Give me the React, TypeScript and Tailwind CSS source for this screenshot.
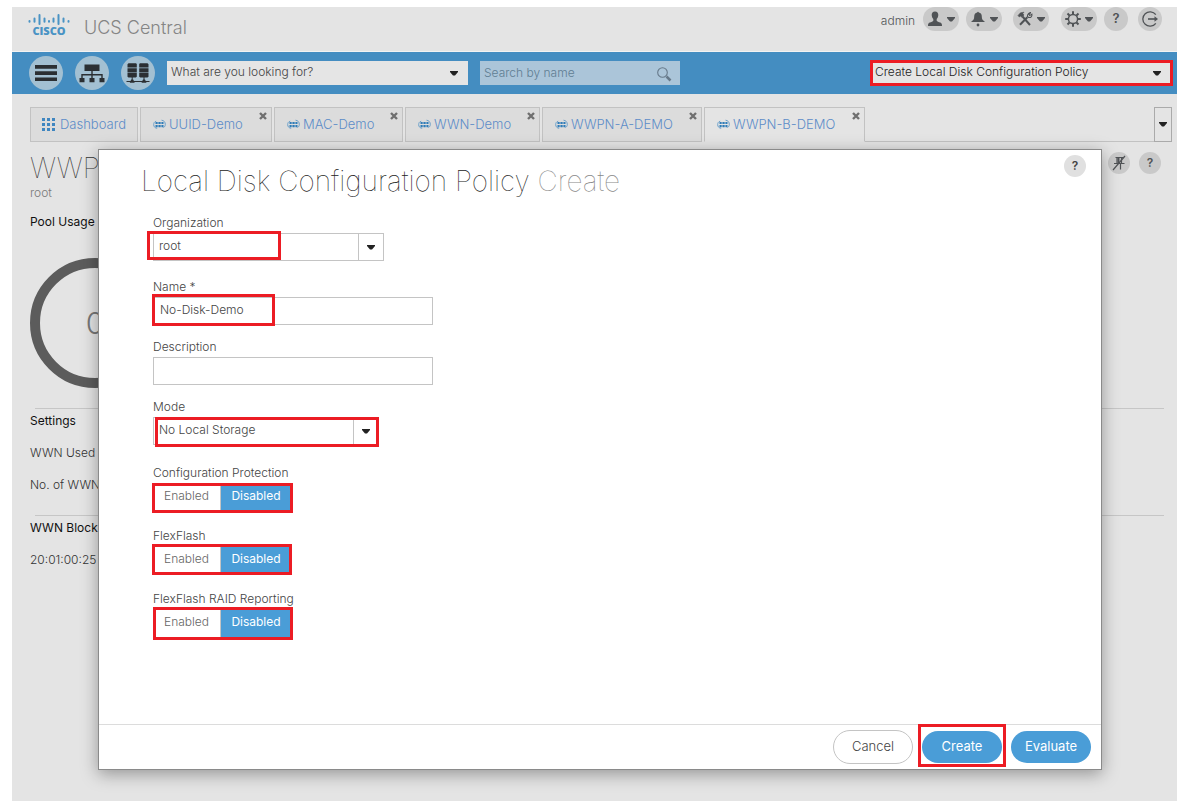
import React from 'react';
import clsx from 'clsx';

const Caret: React.FC<{ className?: string }> = ({ className }) => (
    <svg viewBox="0 0 8 5" className={clsx('w-2 h-[5px] shrink-0', className)} aria-hidden="true">
        <path d="M0 0h8v1L5 4.500H3L0 1z" fill="currentColor" />
    </svg>
);

// Red frame laid over a control that the guide points at
const Highlight: React.FC<{ className: string }> = ({ className }) => (
    <span className={clsx('absolute border-[3px] border-[#ec1c24] pointer-events-none', className)} />
);

const CiscoLogo: React.FC = () => (
    <div className="w-[42px] flex flex-col items-center text-[#4a93c4]">
        <svg viewBox="0 0 42 11" className="w-[42px] h-[11px]" fill="none" stroke="currentColor" strokeWidth="2" strokeLinecap="round">
            <path d="M1.5 7v.8M6.500 4.600v3.200M11.500 1v9M16.500 4.600v3.200M21 7v.8M25.500 4.600v3.200M30.500 1v9M35.500 4.600v3.200M40.500 7v.8" />
        </svg>
        <span className="font-['Open_Sans',sans-serif] text-[11px] leading-[12px] font-extrabold">CISCO</span>
    </div>
);

const PoolIcon: React.FC = () => (
    <svg viewBox="0 0 13 11" className="w-[13px] h-[11px] shrink-0" fill="none" stroke="#6a9fca" aria-hidden="true">
        <path d="M3.2 2.200C1.400 2.600.7 4 .7 5.700c0 2 1.300 3.400 3.500 3.600" />
        <path d="M8.500 1.200c2.400.2 3.800 1.900 3.800 4.100 0 1.500-.7 2.700-1.800 3.200" />
        <path d="M4 4h5.500M4 7h5.500" strokeWidth=".7" />
        <path d="M2.500 2.900h2.100v2.200H2.500zM5.500 2.900h2.100v2.200H5.500zM8.500 2.900h2v2.200h-2zM2.500 6h2.100v2.200H2.500zM5.500 6h2.100v2.200H5.500zM8.500 6h2v2.200h-2z" fill="#2f7cb8" stroke="none" />
    </svg>
);

const UserIcon = () => (
    <svg viewBox="0 0 16 16" className="w-4 h-4" fill="currentColor">
        <path d="M8 .5c2.200 0 3.400 1.500 3.300 3.600C11.200 6 10.500 7.300 9.700 8v1.700c.4.900 2 1.200 3.600 1.900 1.300.6 1.700 1.400 1.700 3.400H1c0-2 .4-2.800 1.700-3.400 1.600-.7 3.200-1 3.600-1.900V8c-.8-.7-1.500-2-1.600-3.900C4.600 2 5.800.5 8 .5z" />
    </svg>
);

const BellIcon = () => (
    <svg viewBox="0 0 16 16" className="w-4 h-4" fill="currentColor">
        <path d="M7.200 1.500C7.200.5 8.800.5 8.800 1.500c2 .4 3 1.900 3 4 0 2.800.8 3.600 2.700 4.700V11h-13v-.8C3.400 9.100 4.200 8.300 4.200 5.500c0-2.100 1-3.600 3-4z" />
        <circle cx="8" cy="14" r="1.400" />
    </svg>
);

const ToolsIcon = () => (
    <svg viewBox="0 0 16 16" className="w-4 h-4" fill="none" stroke="currentColor">
        <path d="M5.500 5.500l7.500 8.500" strokeWidth="2" />
        <path d="M1 4.500l2.500-2.700 3.500-.6-1.200 1.400L7 4 4.800 6.300 3.500 5 2.300 6z" fill="currentColor" strokeWidth=".6" />
        <path d="M10.300 6.200L3 13.800" strokeWidth="2" />
        <path d="M13.800 1.500L11.900 3.400l.8 1.200 2.200-1.500c.5 2.300-1.200 3.900-3.400 3.300-1.700-.7-1.700-4 2.300-4.900" strokeWidth="1.100" />
    </svg>
);

const GearIcon = () => (
    <svg viewBox="0 0 16 16" className="w-4 h-4" fill="none" stroke="currentColor">
        <circle cx="8" cy="8" r="4.600" strokeWidth="1.500" />
        <path d="M8 .2v3M8 12.800v3M.2 8h3M12.800 8h3M2.500 2.500l2 2M11.500 11.500l2 2M2.500 13.500l2-2M11.500 4.500l2-2" strokeWidth="2" />
    </svg>
);

const LogoutIcon = () => (
    <svg viewBox="0 0 18 18" className="w-[18px] h-[18px]" fill="none" stroke="currentColor" strokeWidth="1.300">
        <path d="M14.800 4.700A7.200 7.200 0 1 0 14.800 13.300" />
        <path d="M7 9h8" strokeWidth="1.600" />
        <path d="M13.500 6.300L17 9l-3.500 2.700z" fill="currentColor" stroke="none" />
    </svg>
);

const PinIcon = () => (
    <svg viewBox="0 0 16 16" className="w-4 h-4" fill="none" stroke="currentColor" strokeWidth="1.200">
        <path d="M4.500 2.500h8M6 2.500v5.500M10.500 2.500v5.500M3 8.500h10.500M9.500 9v5.500" />
        <path d="M6.500 3h2v5h-2z" fill="currentColor" stroke="none" />
        <path d="M14 1L2 15" />
    </svg>
);

const MenuIcon = () => (
    <svg viewBox="0 0 24 24" className="w-6 h-6" fill="currentColor">
        <path d="M1 4h22v3.700H1zM1 10.200h22v3.700H1zM1 16.400h22v3.700H1z" />
    </svg>
);

const TreeIcon = () => (
    <svg viewBox="0 0 26 24" className="w-[26px] h-6" fill="currentColor">
        <path d="M5.500 3.500h15V10h-15zM.5 17h5v4.300h-5zM10.500 17h5v4.300h-5zM20.500 17h5v4.300h-5z" />
        <path d="M13 10v7M3 17v-3.300h20V17" fill="none" stroke="currentColor" strokeWidth="1.400" />
    </svg>
);

const ServersIcon = () => (
    <svg viewBox="0 0 24 24" className="w-6 h-6" fill="currentColor">
        <path d="M2.500 2.200H10l.8.8v3.600H1.500V3.200zM1.500 7.200h9.300v4.300H1.500zM1.500 12.100h9.300v3.600l-1 .8H2.500l-1-.8zM14 2.200h7.500l1 1v3.400h-9.300V3zM13.200 7.200h9.300v4.300h-9.300zM13.200 12.100h9.300v3.600l-1 .8h-7.300l-1-.8zM5.200 18.500h2l1.500 3.300h-5zM17 18.500h2l1.500 3.300h-5z" />
        <path d="M.5 20.500h23M6.200 16v3M18 16v3" fill="none" stroke="currentColor" strokeWidth="1" />
    </svg>
);

const pills = [
    { label: 'Account', Icon: UserIcon, spacing: 'ml-2' },
    { label: 'Alerts', Icon: BellIcon, spacing: 'ml-[7px]' },
    { label: 'Tools', Icon: ToolsIcon, spacing: 'ml-[11px]' },
    { label: 'Settings', Icon: GearIcon, spacing: 'ml-3' },
];

const Header: React.FC = () => (
    <header className="h-[45px] pl-4 pr-[15px] border-b border-[#f2f2f2] flex items-start justify-between">
        <div className="pt-[7px] flex items-start gap-[14px]">
            <CiscoLogo />
            <span className="pt-[2px] text-lg leading-6 font-light text-[#858585]">UCS Central</span>
        </div>
        <div className="flex items-start text-[#505356]">
            <span className="pt-[2px] text-xs leading-6 font-light">admin</span>
            {pills.map(({ label, Icon, spacing }) => (
                <button key={label} aria-label={label} className={clsx('w-9 h-6 rounded-full bg-[#c9c9c9] flex items-center justify-center gap-1', spacing)}>
                    <Icon />
                    <Caret />
                </button>
            ))}
            <button className="ml-[7px] w-6 h-6 rounded-full bg-[#c9c9c9] text-[13px] font-semibold">?</button>
            <button aria-label="Log out" className="ml-[10px] w-6 h-6 rounded-full bg-[#c9c9c9] flex items-center justify-center">
                <LogoutIcon />
            </button>
        </div>
    </header>
);

const NavBar: React.FC = () => {
    const shortcuts = [
        { label: 'Menu', Icon: MenuIcon },
        { label: 'Organizations', Icon: TreeIcon },
        { label: 'Servers', Icon: ServersIcon },
    ];

    return (
        <nav className="h-[42px] pl-[17px] pr-1 bg-[#448dc1] flex items-center">
            <div className="flex gap-3">
                {shortcuts.map(({ label, Icon }) => (
                    <button key={label} aria-label={label} className="w-[34px] h-[34px] rounded-full bg-[#a3c0d2] text-[#2b2f33] flex items-center justify-center">
                        <Icon />
                    </button>
                ))}
            </div>
            <div className="relative ml-3 w-[301px]">
                <select aria-label="What are you looking for?" className="block w-full h-6 px-1 pb-[2px] appearance-none bg-[#e5e5e5] text-xs font-light text-[#444]">
                    <option>What are you looking for?</option>
                </select>
                <Caret className="absolute right-[10px] top-[10px] text-[#222]" />
            </div>
            <div className="relative ml-3 w-[200px]">
                <input aria-label="Search by name" placeholder="Search by name" className="block w-full h-6 px-1 pb-[2px] bg-[#abc5d9] text-xs font-light placeholder:text-[#5f7d92]" />
                <svg viewBox="0 0 16 16" className="absolute right-2 top-[5px] w-4 h-4" fill="none" stroke="#66798a" aria-hidden="true">
                    <circle cx="6.500" cy="6.500" r="4.800" strokeWidth="1.100" />
                    <path d="M10.500 10.500l4 4" strokeWidth="2.500" />
                </svg>
            </div>
            <div className="relative ml-auto w-[303px]">
                <select aria-label="Task" className="block w-full h-6 px-[5px] pb-[2px] appearance-none bg-[#e5e5e5] text-xs font-light text-[#222]">
                    <option>Create Local Disk Configuration Policy</option>
                </select>
                <Caret className="absolute right-3 top-[10px] text-[#222]" />
                <Highlight className="-inset-y-[1px] inset-x-0" />
            </div>
        </nav>
    );
};

const tabs = [
    { name: 'UUID-Demo', width: 'w-[132px]' },
    { name: 'MAC-Demo', width: 'w-[129px]' },
    { name: 'WWN-Demo', width: 'w-[135px]' },
    { name: 'WWPN-A-DEMO', width: 'w-[160px]' },
    { name: 'WWPN-B-DEMO', width: 'w-[161px]', active: true },
];

const TabBar: React.FC = () => (
    <div className="mt-[13px] ml-[18px] mr-[5px] h-[35px] flex gap-[2px] text-[13px] font-light text-[#5d8cc8]">
        <button className="w-[108px] border border-[#c2c2c2] bg-[#dcdcdc] flex items-center justify-center gap-[5px]">
            <svg viewBox="0 0 13 13" className="w-[13px] h-[13px]" fill="#3f86c0" aria-hidden="true">
                <path d="M0 0h3v3H0zM5 0h3v3H5zM10 0h3v3h-3zM0 5h3v3H0zM5 5h3v3H5zM10 5h3v3h-3zM0 10h3v3H0zM5 10h3v3H5zM10 10h3v3h-3z" />
            </svg>
            Dashboard
        </button>
        {tabs.map(({ name, width, active }) => (
            <div key={name} className={clsx('border border-[#c2c2c2] pl-3 pr-1 flex justify-between', width, active ? 'border-b-transparent' : 'bg-[#dcdcdc]')}>
                <button className="flex items-center gap-[3px] whitespace-nowrap">
                    <PoolIcon />
                    {name}
                </button>
                <button aria-label={`Close ${name}`} className="self-start pt-1 text-[#6f6f6f]">
                    <svg viewBox="0 0 8 8" className="w-2 h-2" fill="none" stroke="currentColor" strokeWidth="2.400">
                        <path d="M1 1l6 6M7 1L1 7" />
                    </svg>
                </button>
            </div>
        ))}
        <div className="flex-1 -mx-[2px] border-b border-[#c2c2c2]" />
        <button aria-label="More tabs" className="w-[18px] border border-[#aaa] text-[#222] flex items-center justify-center">
            <Caret />
        </button>
    </div>
);

const PoolPage: React.FC = () => (
    <main className="pl-[18px] pr-[13px] text-xs leading-4 text-[#333]">
        <div className="pt-[10px] flex justify-between">
            <div>
                <h1 className="text-[28px] leading-8 font-thin">WWPN</h1>
                <p className="mt-[1px] font-light text-[#7a7a7a]">root</p>
            </div>
            <div className="flex gap-[9px] pr-[3px] text-[#505356]">
                <button aria-label="Unpin" className="w-[22px] h-[22px] rounded-full bg-[#c9c9c9] flex items-center justify-center">
                    <PinIcon />
                </button>
                <button className="w-[22px] h-[22px] rounded-full bg-[#c9c9c9] font-semibold">?</button>
            </div>
        </div>
        <h2 className="mt-[13px] text-[#111]">Pool Usage</h2>
        <div className="mt-7 w-[130px] h-[130px] rounded-full border-[10px] border-[#5c5c5c] flex items-center justify-center text-[30px] font-light text-[#777]">0</div>
        <hr className="mt-5 ml-[5px] border-[#c6c6c6]" />
        <h2 className="mt-1 text-[#111]">Settings</h2>
        <p className="mt-4 font-light">WWN Used By</p>
        <p className="mt-4 font-light">No. of WWNs</p>
        <hr className="mt-[22px] ml-[5px] border-[#c6c6c6]" />
        <h2 className="mt-1 text-[#111]">WWN Block</h2>
        <p className="mt-4 font-light">20:01:00:25</p>
    </main>
);

interface FieldProps {
    id: string;
    label: string;
    className?: string;
    children: React.ReactNode;
}

const Field: React.FC<FieldProps> = ({ id, label, className, children }) => (
    <div className={className}>
        <label htmlFor={id} className="block h-5 leading-5">{label}</label>
        {children}
    </div>
);

const Dropdown: React.FC<{ id: string; value: string; className: string; children: React.ReactNode }> = ({ id, value, className, children }) => (
    <div className={clsx('relative', className)}>
        <select id={id} className="block w-full h-7 pl-[5px] pb-[2px] appearance-none border border-[#c4c4c4] bg-white">
            <option>{value}</option>
        </select>
        <span className="absolute inset-y-0 right-0 w-[26px] pr-[2px] border-l border-[#c4c4c4] flex items-center justify-center pointer-events-none text-[#222]">
            <Caret />
        </span>
        {children}
    </div>
);

const Toggle: React.FC<{ name: string; label: string; frame: string }> = ({ name, label, frame }) => (
    <fieldset>
        <legend className="h-5 leading-5">{label}</legend>
        <div className="relative w-[138px] h-7 flex leading-[26px] text-center">
            <label className="w-[67px] text-[#666]">
                <input type="radio" name={name} className="sr-only" />
                Enabled
            </label>
            <label className="flex-1 border-l border-[#c4c4c4] bg-[#4a9dd7] text-white font-normal">
                <input type="radio" name={name} defaultChecked className="sr-only" />
                Disabled
            </label>
            <Highlight className={frame} />
        </div>
    </fieldset>
);

const PolicyDialog: React.FC = () => (
    <div role="dialog" aria-labelledby="dialog-title" className="absolute top-[142px] left-[86px] right-[75px] min-h-[621px] border border-[#8a8a8a] bg-white shadow-[0_4px_16px_rgba(0,0,0,0.35)] flex flex-col text-xs font-light text-[#444]">
        <div className="pt-[5px] pl-[42px] pr-[15px] flex justify-between">
            <h1 id="dialog-title" className="pt-2 text-[28px] leading-9 font-thin text-[#222]">
                Local Disk Configuration Policy <span className="text-[#888]">Create</span>
            </h1>
            <button className="w-[22px] h-[22px] rounded-full bg-[#e0e0e0] font-semibold">?</button>
        </div>
        <form className="flex-1 pt-[14px] pl-[54px] pb-10">
            <Field id="org" label="Organization">
                <Dropdown id="org" value="root" className="w-[231px]">
                    <Highlight className="-left-[6px] -top-[2px] w-[134px] h-[29px]" />
                </Dropdown>
            </Field>
            <Field id="name" label="Name *" className="mt-4">
                <div className="relative w-[280px]">
                    <input id="name" defaultValue="No-Disk-Demo" className="block w-full h-7 pl-[6px] pb-1 border border-[#c4c4c4]" />
                    <Highlight className="-left-[1px] -top-[3px] w-[123px] h-8" />
                </div>
            </Field>
            <Field id="description" label="Description" className="mt-3">
                <input id="description" className="block w-[280px] h-7 px-[6px] border border-[#c4c4c4]" />
            </Field>
            <Field id="mode" label="Mode" className="mt-3">
                <Dropdown id="mode" value="No Local Storage" className="w-[226px]">
                    <Highlight className="left-[2px] top-0 w-[224px] h-[30px]" />
                </Dropdown>
            </Field>
            <div className="mt-[18px] flex flex-col gap-[15px]">
                <Toggle name="protection" label="Configuration Protection" frame="-left-[1px] top-0 w-[141px] h-[30px]" />
                <Toggle name="flexflash" label="FlexFlash" frame="-left-[1px] -top-[2px] w-[140px] h-[31px]" />
                <Toggle name="raid" label="FlexFlash RAID Reporting" frame="left-0 -top-[2px] w-[140px] h-[33px]" />
            </div>
        </form>
        <div className="h-[45px] pr-[10px] border-t border-[#dcdcdc] flex items-center justify-end gap-[9px] text-[13px]">
            <button className="w-20 h-[34px] rounded-full border border-[#c4c4c4]">Cancel</button>
            <div className="relative">
                <button className="w-20 h-8 rounded-full bg-[#4a9dd7] text-white font-normal">Create</button>
                <Highlight className="-left-1 -right-1 -top-[7px] -bottom-1" />
            </div>
            <button className="w-20 h-8 rounded-full bg-[#4a9dd7] text-white font-normal">Evaluate</button>
        </div>
    </div>
);

const App: React.FC = () => {
    return (
        <div className="min-h-screen pt-[7px] pl-3 pr-1 bg-white flex flex-col font-[Inter,'Liberation_Sans',sans-serif]">
            <div className="relative flex-1 bg-[#e4e4e4]">
                <Header />
                <NavBar />
                <TabBar />
                <PoolPage />
                <PolicyDialog />
            </div>
        </div>
    );
};

export default App;
